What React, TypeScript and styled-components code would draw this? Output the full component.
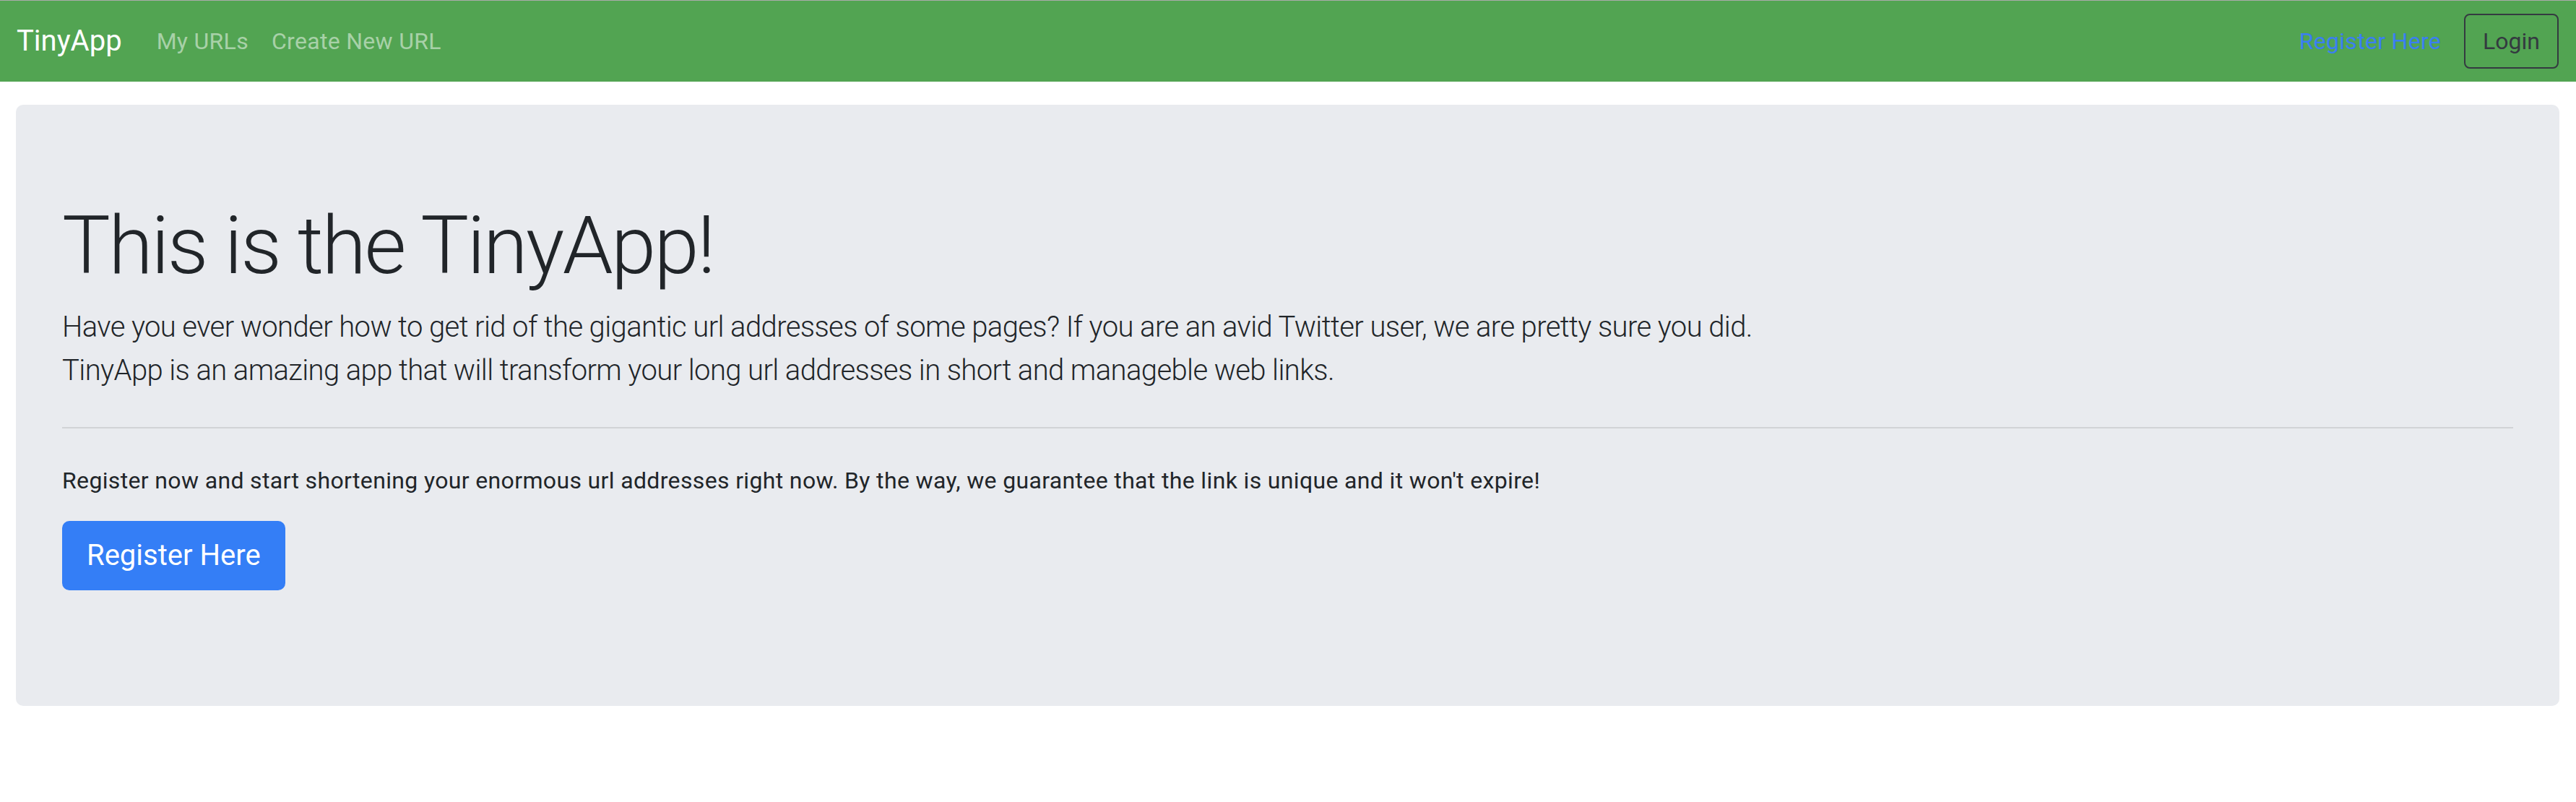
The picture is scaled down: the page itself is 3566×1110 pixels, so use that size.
import React from 'react';
import styled, { createGlobalStyle } from 'styled-components';

const GlobalStyle = createGlobalStyle`
  html, body {
    margin: 0;
    padding: 0;
    background: #ffffff;
  }
  body {
    font-family: Roboto, "Liberation Sans", Arial, sans-serif;
    color: #212529;
    -webkit-font-smoothing: antialiased;
  }
  * {
    box-sizing: border-box;
  }
`;

const Page = styled.div`
  border-top: 1px solid #ababab;
  min-height: 1109px;
`;

const Navbar = styled.nav`
  display: flex;
  align-items: center;
  height: 112px;
  padding: 0 24px 0 23px;
  background: #52a452;
`;

const Brand = styled.a`
  font-size: 40px;
  line-height: 60px;
  color: #ffffff;
  text-decoration: none;
  margin-right: 32px;
`;

const NavList = styled.div`
  display: flex;
  align-items: center;
`;

const NavLink = styled.a<{ $accent?: boolean }>`
  font-size: 32px;
  line-height: 48px;
  letter-spacing: 0.3px;
  padding: 0 16px;
  text-decoration: none;
  color: ${p => (p.$accent ? '#3a7ef2' : 'rgba(255, 255, 255, 0.5)')};
`;

const RightNav = styled.div`
  display: flex;
  align-items: center;
  gap: 16px;
  margin-left: auto;
`;

const OutlineButton = styled.button`
  font-family: inherit;
  font-size: 32px;
  line-height: 48px;
  padding: 12px 24px;
  color: #343a40;
  background: transparent;
  border: 2px solid #343a40;
  border-radius: 8px;
`;

const Main = styled.main`
  padding: 32px 23px 0 22px;
`;

const Jumbotron = styled.section`
  background: #e9ebef;
  border-radius: 10px;
  padding: 128px 64px;
`;

const Display = styled.h1`
  margin: 0 0 16px;
  font-size: 112px;
  font-weight: 300;
  line-height: 1.2;
  letter-spacing: -2.6px;
`;

const Lead = styled.p`
  margin: 0 0 32px;
  font-size: 40px;
  font-weight: 300;
  line-height: 60px;
  letter-spacing: -0.6px;
`;

const Divider = styled.hr`
  margin: 48px 0;
  border: 0;
  border-top: 2px solid rgba(0, 0, 0, 0.1);
`;

const Text = styled.p`
  margin: 0 0 32px;
  font-size: 32px;
  line-height: 48px;
  letter-spacing: 0.35px;
`;

const ButtonRow = styled.div`
  display: flex;
  margin-bottom: 32px;
`;

const PrimaryButton = styled.a`
  display: inline-block;
  font-size: 40px;
  line-height: 60px;
  padding: 16px 32px;
  color: #ffffff;
  background: #347ef6;
  border: 2px solid #347ef6;
  border-radius: 10px;
  text-decoration: none;
`;

export default function App() {
  return (
    <Page>
      <GlobalStyle />
      <Navbar>
        <Brand href="#">TinyApp</Brand>
        <NavList>
          <NavLink href="#">My URLs</NavLink>
          <NavLink href="#">Create New URL</NavLink>
        </NavList>
        <RightNav>
          <NavLink href="#" $accent>Register Here</NavLink>
          <OutlineButton>Login</OutlineButton>
        </RightNav>
      </Navbar>
      <Main>
        <Jumbotron>
          <Display>This is the TinyApp!</Display>
          <Lead>
            Have you ever wonder how to get rid of the gigantic url addresses of some pages? If you are an avid Twitter user, we are pretty sure you did.
            <br />
            TinyApp is an amazing app that will transform your long url addresses in short and manageble web links.
          </Lead>
          <Divider />
          <Text>
            Register now and start shortening your enormous url addresses right now. By the way, we guarantee that the link is unique and it won't expire!
          </Text>
          <ButtonRow>
            <PrimaryButton href="#">Register Here</PrimaryButton>
          </ButtonRow>
        </Jumbotron>
      </Main>
    </Page>
  );
}
